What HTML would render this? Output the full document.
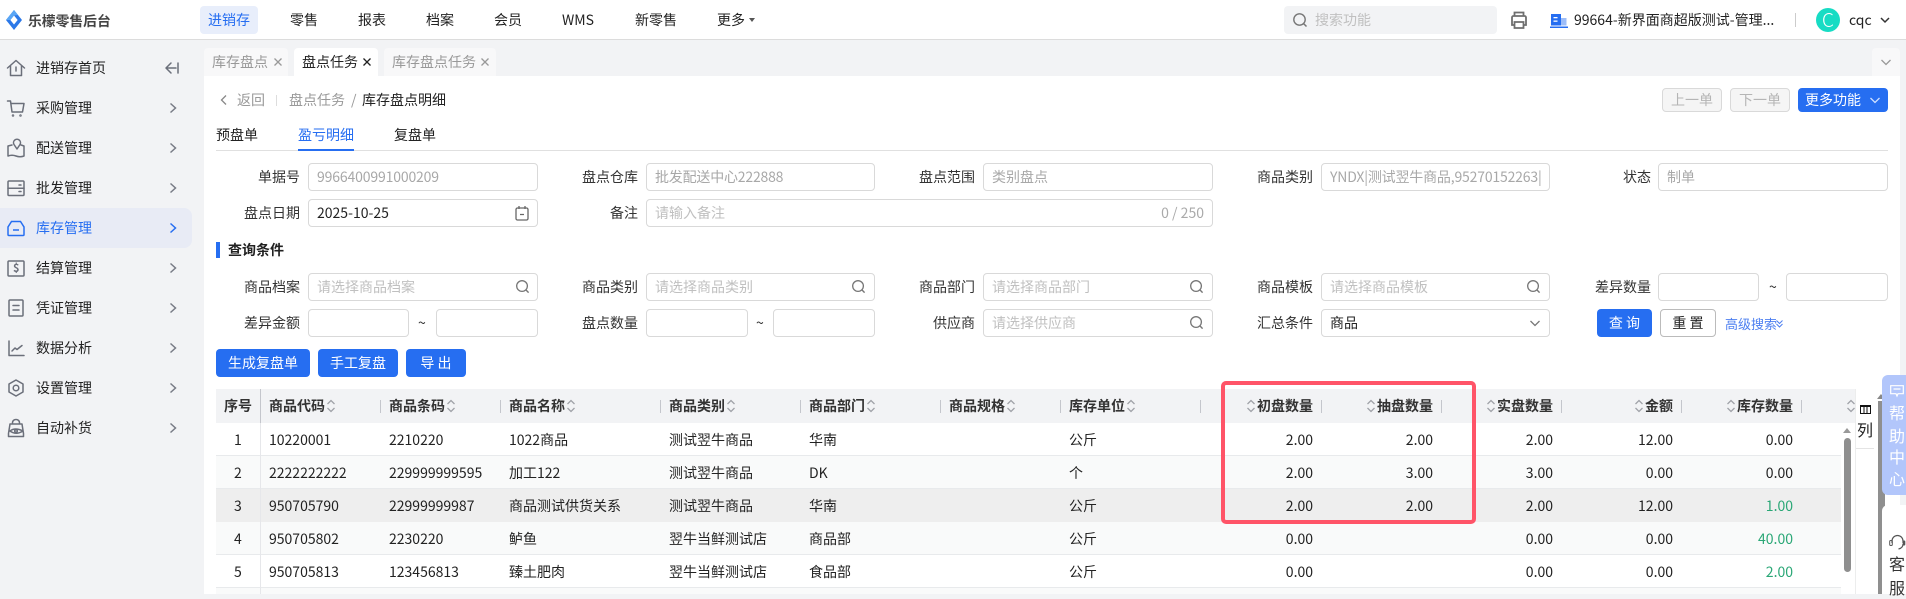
<!DOCTYPE html>
<html lang="zh"><head><meta charset="utf-8"><title>库存盘点明细</title>
<style>
*{box-sizing:border-box}
html,body{margin:0;padding:0}
body{width:1906px;height:594px;overflow:hidden;position:relative;background:#f2f3f5;font-family:"Noto Sans CJK SC","Liberation Sans",sans-serif;font-size:14px;color:#222}
.a{position:absolute}
.t{position:absolute;white-space:nowrap;line-height:20px;font-size:14px}
.i{position:absolute;height:28px;background:#fff;border:1px solid #d9d9d9;border-radius:4px;line-height:26px;padding-left:8px;white-space:nowrap;overflow:hidden}
.g{color:#a8a8a8}.p{color:#c0c0c0}.l{color:#333}
.b{position:absolute;background:#266ef1;color:#fff;border-radius:4px;text-align:center;height:28px;line-height:28px;white-space:nowrap}
.h{font-weight:700;color:#333}
.n{stroke:#6b6f7a;fill:none;stroke-width:1.5;stroke-linejoin:round;stroke-linecap:round}
svg{position:absolute;overflow:visible}
.rb{position:absolute;left:216px;width:1625px;border-bottom:1px solid #e8eaec}
.sp{position:absolute;top:400px;width:1px;height:13px;background:#c4c6cc}
.gr{color:#2aa776}
</style></head><body>
<svg width="0" height="0" style="position:absolute"><defs>
<symbol id="s" viewBox="0 0 8 14" overflow="visible"><path d="M0.500 5L4 1.500 7.500 5M0.500 9L4 12.500 7.500 9" fill="none" stroke="#a0a2a8" stroke-width="1.300"/></symbol>
<symbol id="q" viewBox="0 0 16 16" overflow="visible"><circle cx="7.500" cy="7.500" r="5.700" fill="none" stroke="#777" stroke-width="1.400"/><path d="M11.500 11.500L14.500 14.500" stroke="#777" stroke-width="1.500" fill="none"/></symbol>
<symbol id="c" viewBox="0 0 8 12" overflow="visible"><path d="M1.500 1.500L6.500 6l-5 4.500" fill="none" stroke="#777b85" stroke-width="1.500"/></symbol>
<symbol id="x" viewBox="0 0 8 8" overflow="visible"><path d="M.5 .5L7.500 7.500M7.500 .5L.5 7.500" fill="none" stroke="currentColor" stroke-width="1.300"/></symbol>
</defs></svg>

<!-- header -->
<div class="a" style="left:0;top:0;width:1906px;height:40px;background:#fff;border-bottom:1px solid #dcdcdc"></div>
<svg style="left:6px;top:10px" width="16" height="20" viewBox="0 0 14 20" preserveAspectRatio="none"><path d="M7 0L14 10L7 20L0 10Z" fill="#2b78e8"/><path d="M7 5.500L10.200 10L7 14.500L3.800 10Z" fill="#fff"/><path d="M7 0L10.500 5 7 5.500 3.800 10 0 10Z" fill="#5aa6f5"/></svg>
<div class="t" style="left:28px;top:10px;font-weight:700;color:#444;font-size:13.800px">乐檬零售后台</div>
<div class="a" style="left:200px;top:6px;width:58px;height:28px;background:#e8eefb;border-radius:4px"></div>
<div class="t" style="left:208px;top:10px;color:#266ef1">进销存</div>
<div class="t" style="left:290px;top:10px">零售</div>
<div class="t" style="left:358px;top:10px">报表</div>
<div class="t" style="left:426px;top:10px">档案</div>
<div class="t" style="left:494px;top:10px">会员</div>
<div class="t" style="left:562px;top:10px">WMS</div>
<div class="t" style="left:635px;top:10px">新零售</div>
<div class="t" style="left:717px;top:10px">更多</div>
<div class="a" style="left:749px;top:18px;border:3.500px solid transparent;border-top:4px solid #555;border-bottom:0"></div>
<div class="a" style="left:1284px;top:6px;width:213px;height:28px;background:#f2f3f5;border-radius:4px"></div>
<svg style="left:1292px;top:12px" width="16" height="16"><use href="#q"/></svg>
<div class="t p" style="left:1315px;top:10px">搜索功能</div>
<svg style="left:1510px;top:11px" width="18" height="18" viewBox="0 0 18 18"><path d="M4.500 5V1.500h9V5M4.500 14H2V6.500A1.500 1.500 0 0 1 3.500 5h11A1.500 1.500 0 0 1 16 6.500V14h-2.500M4.500 11h9v6h-9z" fill="none" stroke="#6f6f6f" stroke-width="1.800"/></svg>
<svg style="left:1550px;top:14px" width="18" height="14" viewBox="0 0 18 14"><rect x="1" y="0" width="10" height="11.500" fill="#266ef1"/><rect x="11" y="4" width="5.500" height="7.500" fill="#9dbdf8"/><rect x="0" y="12.500" width="18" height="1.500" fill="#266ef1"/><rect x="3.500" y="3" width="4" height="1.300" fill="#fff"/><rect x="3.500" y="6.500" width="4" height="1.300" fill="#fff"/></svg>
<div class="t" style="left:1574px;top:10px">99664-新界面商超版测试-管理...</div>
<div class="a" style="left:1795px;top:13px;width:1px;height:14px;background:#ccc"></div>
<div class="a" style="left:1816px;top:8px;width:24px;height:24px;border-radius:50%;background:#17dcc4;color:#fff;text-align:center;line-height:24px;font-size:19px;font-weight:300">C</div>
<div class="t" style="left:1849px;top:10px">cqc</div>
<svg style="left:1880px;top:17px" width="10" height="7" viewBox="0 0 10 7"><path d="M1 1l4 4 4-4" fill="none" stroke="#333" stroke-width="1.500"/></svg>

<!-- sidebar -->
<div class="a" style="left:0;top:208px;width:192px;height:40px;background:#e8ebf5;border-radius:0 8px 8px 0"></div>
<svg style="left:7px;top:59px" width="18" height="18" viewBox="0 0 18 18" class="n"><path d="M.5 9L9 1.500 17.500 9M3.500 7V16.500h11V7M9 8v4"/></svg>
<div class="t" style="left:36px;top:58px">进销存首页</div>
<svg style="left:165px;top:62px" width="14" height="12" viewBox="0 0 14 12" class="n"><path d="M6 1L1 6l5 5M1 6h10M13 1v10"/></svg>
<svg style="left:7px;top:99px" width="18" height="18" viewBox="0 0 18 18" class="n"><path d="M.5 2h3l1.500 11h10.500L17 4.500H4"/><circle cx="6" cy="16.500" r=".5"/><circle cx="13.500" cy="16.500" r=".5"/></svg>
<div class="t" style="left:36px;top:98px">采购管理</div>
<svg style="left:7px;top:139px" width="18" height="18" viewBox="0 0 18 18" class="n"><path d="M5 6L1 7v10q4-1.500 8 0t8 0V7L14 6M10 10L7 5.500a3.500 3.500 0 1 1 6 0z"/></svg>
<div class="t" style="left:36px;top:138px">配送管理</div>
<svg style="left:7px;top:179px" width="18" height="18" viewBox="0 0 18 18" class="n"><rect x="1" y="2" width="16" height="14.500" rx="1"/><path d="M1 9.200h16M12 6h2M12 12.500h2"/></svg>
<div class="t" style="left:36px;top:178px">批发管理</div>
<svg style="left:7px;top:219px" width="18" height="18" viewBox="0 0 18 18" fill="none" stroke="#266ef1" stroke-width="1.500"><path d="M4.500 2.500h9L17 8v7.500a1 1 0 0 1-1 1H2a1 1 0 0 1-1-1V8zM6 11h6"/></svg>
<div class="t" style="left:36px;top:218px;color:#266ef1">库存管理</div>
<svg style="left:7px;top:259px" width="18" height="18" viewBox="0 0 18 18" class="n"><rect x="1" y="2" width="16" height="15" rx="1"/></svg>
<div class="t" style="left:13px;top:258px;font-size:11px;font-weight:700;color:#6b6f7a">$</div>
<div class="t" style="left:36px;top:258px">结算管理</div>
<svg style="left:8px;top:299px" width="16" height="18" viewBox="0 0 16 18" class="n"><rect x="1" y="1" width="14" height="16" rx="1"/><path d="M5 6.500h6M5 11h6"/></svg>
<div class="t" style="left:36px;top:298px">凭证管理</div>
<svg style="left:7px;top:339px" width="18" height="18" viewBox="0 0 18 18" class="n"><path d="M2 2v14.500h15M5 12l3-3 2 1.500 5-4"/></svg>
<div class="t" style="left:36px;top:338px">数据分析</div>
<svg style="left:7px;top:379px" width="18" height="18" viewBox="0 0 18 18" class="n"><path d="M9 1l7 4v8l-7 4-7-4V5z"/><circle cx="9" cy="9" r="2.800"/></svg>
<div class="t" style="left:36px;top:378px">设置管理</div>
<svg style="left:7px;top:419px" width="18" height="18" viewBox="0 0 18 18" class="n"><path d="M5.500 5V3.500a3.500 3 0 0 1 7 0V5M3 5h12l1.500 9.500v3H1.500v-3zM3 12q5-4 13 0-7 4.500-13 0z"/><circle cx="9" cy="12" r="1.300"/></svg>
<div class="t" style="left:36px;top:418px">自动补货</div>
<svg style="left:169px;top:102px" width="8" height="12"><use href="#c"/></svg>
<svg style="left:169px;top:142px" width="8" height="12"><use href="#c"/></svg>
<svg style="left:169px;top:182px" width="8" height="12"><use href="#c"/></svg>
<svg style="left:169px;top:222px" width="8" height="12" viewBox="0 0 8 12"><path d="M1.500 1.500L6.500 6l-5 4.500" fill="none" stroke="#266ef1" stroke-width="1.500"/></svg>
<svg style="left:169px;top:262px" width="8" height="12"><use href="#c"/></svg>
<svg style="left:169px;top:302px" width="8" height="12"><use href="#c"/></svg>
<svg style="left:169px;top:342px" width="8" height="12"><use href="#c"/></svg>
<svg style="left:169px;top:382px" width="8" height="12"><use href="#c"/></svg>
<svg style="left:169px;top:422px" width="8" height="12"><use href="#c"/></svg>

<!-- tabs -->
<div class="a" style="left:204px;top:48px;width:84px;height:28px;background:#f8f8f9;border-radius:4px 4px 0 0"></div>
<div class="t" style="left:212px;top:52px;color:#999">库存盘点</div><svg style="left:274px;top:58px;color:#999" width="8" height="8"><use href="#x"/></svg>
<div class="a" style="left:294px;top:48px;width:84px;height:28px;background:#fff;border-radius:4px 4px 0 0"></div>
<div class="t" style="left:302px;top:52px">盘点任务</div><svg style="left:363px;top:58px;color:#222" width="8" height="8"><use href="#x"/></svg>
<div class="a" style="left:384px;top:48px;width:112px;height:28px;background:#f8f8f9;border-radius:4px 4px 0 0"></div>
<div class="t" style="left:392px;top:52px;color:#999">库存盘点任务</div><svg style="left:481px;top:58px;color:#999" width="8" height="8"><use href="#x"/></svg>
<div class="a" style="left:1872px;top:48px;width:28px;height:28px;background:#f8f8f9;border-radius:4px 4px 0 0"></div>
<svg style="left:1881px;top:59px" width="10" height="7" viewBox="0 0 10 7"><path d="M0.500 1l4.500 4.500L9.500 1" fill="none" stroke="#999" stroke-width="1.300"/></svg>

<!-- content -->
<div class="a" style="left:204px;top:76px;width:1696px;height:518px;background:#fff"></div>
<svg style="left:220px;top:95px" width="7" height="10" viewBox="0 0 7 10"><path d="M6 .5L1.500 5 6 9.500" fill="none" stroke="#888" stroke-width="1.300"/></svg>
<div class="t" style="left:237px;top:90px;color:#999">返回</div>
<div class="a" style="left:276px;top:95px;width:1px;height:11px;background:#ddd"></div>
<div class="t" style="left:289px;top:90px;color:#999">盘点任务</div>
<div class="t" style="left:351px;top:90px;color:#999">/</div>
<div class="t" style="left:362px;top:90px">库存盘点明细</div>
<div class="t" style="left:216px;top:125px">预盘单</div>
<div class="t" style="left:298px;top:125px;color:#266ef1">盈亏明细</div>
<div class="t" style="left:394px;top:125px">复盘单</div>
<div class="a" style="left:216px;top:150px;width:1672px;height:1px;background:#e0e0e0"></div>
<div class="a" style="left:298px;top:149px;width:56px;height:2px;background:#266ef1"></div>

<div class="a" style="left:1662px;top:88px;width:60px;height:24px;background:#f5f5f5;border:1px solid #d9d9d9;border-radius:4px;color:#b5b5b5;text-align:center;line-height:22px">上一单</div>
<div class="a" style="left:1730px;top:88px;width:60px;height:24px;background:#f5f5f5;border:1px solid #d9d9d9;border-radius:4px;color:#b5b5b5;text-align:center;line-height:22px">下一单</div>
<div class="b" style="left:1798px;top:88px;width:90px;height:24px;line-height:24px;text-align:left;padding-left:7px">更多功能</div>
<svg style="left:1870px;top:97px" width="10" height="7" viewBox="0 0 10 7"><path d="M.500 1L5 5.500 9.500 1" fill="none" stroke="#cfe0ff" stroke-width="1.300"/></svg>

<!-- form -->
<div class="t l" style="left:258px;top:167px">单据号</div><div class="i g" style="left:308px;top:163px;width:230px;letter-spacing:-.15px">9966400991000209</div>
<div class="t l" style="left:582px;top:167px">盘点仓库</div><div class="i g" style="left:646px;top:163px;width:229px;letter-spacing:-.2px">批发配送中心222888</div>
<div class="t l" style="left:919px;top:167px">盘点范围</div><div class="i g" style="left:983px;top:163px;width:230px">类别盘点</div>
<div class="t l" style="left:1257px;top:167px">商品类别</div><div class="i g" style="left:1321px;top:163px;width:229px;letter-spacing:-.18px">YNDX|测试翌牛商品,95270152263|</div>
<div class="t l" style="left:1623px;top:167px">状态</div><div class="i g" style="left:1658px;top:163px;width:230px">制单</div>

<div class="t l" style="left:244px;top:203px">盘点日期</div><div class="i" style="left:308px;top:199px;width:230px">2025-10-25</div>
<svg style="left:515px;top:205px" width="14" height="16" viewBox="0 0 14 16"><rect x="1" y="3" width="12" height="12" rx="1.500" fill="none" stroke="#666" stroke-width="1.300"/><path d="M4 1v3M10 1v3M5 9.500h4" stroke="#666" stroke-width="1.300"/></svg>
<div class="t l" style="left:610px;top:203px">备注</div><div class="i p" style="left:646px;top:199px;width:567px">请输入备注</div>
<div class="t" style="right:702px;top:203px;color:#aaa">0 / 250</div>

<div class="a" style="left:216px;top:242px;width:4px;height:16px;background:#266ef1"></div>
<div class="t" style="left:228px;top:240px;font-weight:700">查询条件</div>

<div class="t l" style="left:244px;top:277px">商品档案</div><div class="i p" style="left:308px;top:273px;width:230px">请选择商品档案</div>
<div class="t l" style="left:582px;top:277px">商品类别</div><div class="i p" style="left:646px;top:273px;width:229px">请选择商品类别</div>
<div class="t l" style="left:919px;top:277px">商品部门</div><div class="i p" style="left:983px;top:273px;width:230px">请选择商品部门</div>
<div class="t l" style="left:1257px;top:277px">商品模板</div><div class="i p" style="left:1321px;top:273px;width:229px">请选择商品模板</div>
<div class="t l" style="left:1595px;top:277px">差异数量</div><div class="i" style="left:1658px;top:273px;width:101px"></div>
<div class="t l" style="left:1769px;top:277px">~</div><div class="i" style="left:1786px;top:273px;width:102px"></div>
<svg style="left:515px;top:279px" width="15" height="15"><use href="#q"/></svg>
<svg style="left:851px;top:279px" width="15" height="15"><use href="#q"/></svg>
<svg style="left:1189px;top:279px" width="15" height="15"><use href="#q"/></svg>
<svg style="left:1526px;top:279px" width="15" height="15"><use href="#q"/></svg>

<div class="t l" style="left:244px;top:313px">差异金额</div><div class="i" style="left:308px;top:309px;width:101px"></div>
<div class="t l" style="left:418px;top:313px">~</div><div class="i" style="left:436px;top:309px;width:102px"></div>
<div class="t l" style="left:582px;top:313px">盘点数量</div><div class="i" style="left:646px;top:309px;width:102px"></div>
<div class="t l" style="left:756px;top:313px">~</div><div class="i" style="left:773px;top:309px;width:102px"></div>
<div class="t l" style="left:933px;top:313px">供应商</div><div class="i p" style="left:983px;top:309px;width:230px">请选择供应商</div>
<svg style="left:1189px;top:315px" width="15" height="15"><use href="#q"/></svg>
<div class="t l" style="left:1257px;top:313px">汇总条件</div><div class="i" style="left:1321px;top:309px;width:229px">商品</div>
<svg style="left:1530px;top:320px" width="10" height="7" viewBox="0 0 10 7"><path d="M.500 1L5 5.500 9.500 1" fill="none" stroke="#777" stroke-width="1.300"/></svg>
<div class="b" style="left:1597px;top:309px;width:55px">查 询</div>
<div class="a" style="left:1660px;top:309px;width:56px;height:28px;background:#fff;border:1px solid #bbb;border-radius:4px;text-align:center;line-height:26px">重 置</div>
<div class="t" style="left:1725px;top:314px;color:#4d7ff0;font-size:13px">高级搜索</div>
<svg style="left:1776px;top:320px" width="7" height="8" viewBox="0 0 7 8"><path d="M.500 .5L3.500 3.500 6.500 .5M.500 4L3.500 7 6.500 4" fill="none" stroke="#4d7ff0" stroke-width="1"/></svg>

<div class="b" style="left:216px;top:349px;width:94px">生成复盘单</div>
<div class="b" style="left:318px;top:349px;width:80px">手工复盘</div>
<div class="b" style="left:406px;top:349px;width:60px">导 出</div>

<!-- table -->
<div class="a" style="left:216px;top:389px;width:1639px;height:34px;background:#f2f3f5"></div>
<div class="rb" style="top:423px;height:33px;background:#fff"></div>
<div class="rb" style="top:456px;height:33px;background:#f9fafa"></div>
<div class="rb" style="top:489px;height:33px;background:#eee;border-bottom:0"></div>
<div class="rb" style="top:522px;height:33px;background:#f9fafa"></div>
<div class="rb" style="top:555px;height:33px;background:#fff"></div>
<div class="rb" style="top:588px;height:6px;background:#f9fafa;border:0"></div>
<div class="a" style="left:260px;top:389px;width:1px;height:205px;background:#e6e7ea"></div>
<div class="a" style="left:260px;top:389px;width:1px;height:34px;background:#c4c6cc"></div>

<div class="t h" style="left:224px;top:396px">序号</div>
<div class="t h" style="left:269px;top:396px">商品代码</div><svg style="left:327px;top:399px" width="8" height="14"><use href="#s"/></svg>
<div class="sp" style="left:380px"></div>
<div class="t h" style="left:389px;top:396px">商品条码</div><svg style="left:447px;top:399px" width="8" height="14"><use href="#s"/></svg>
<div class="sp" style="left:500px"></div>
<div class="t h" style="left:509px;top:396px">商品名称</div><svg style="left:567px;top:399px" width="8" height="14"><use href="#s"/></svg>
<div class="sp" style="left:660px"></div>
<div class="t h" style="left:669px;top:396px">商品类别</div><svg style="left:727px;top:399px" width="8" height="14"><use href="#s"/></svg>
<div class="sp" style="left:800px"></div>
<div class="t h" style="left:809px;top:396px">商品部门</div><svg style="left:867px;top:399px" width="8" height="14"><use href="#s"/></svg>
<div class="sp" style="left:940px"></div>
<div class="t h" style="left:949px;top:396px">商品规格</div><svg style="left:1007px;top:399px" width="8" height="14"><use href="#s"/></svg>
<div class="sp" style="left:1060px"></div>
<div class="t h" style="left:1069px;top:396px">库存单位</div><svg style="left:1127px;top:399px" width="8" height="14"><use href="#s"/></svg>
<div class="sp" style="left:1200px"></div>
<svg style="left:1247px;top:399px" width="8" height="14"><use href="#s"/></svg><div class="t h" style="right:593px;top:396px">初盘数量</div>
<div class="sp" style="left:1321px"></div>
<svg style="left:1367px;top:399px" width="8" height="14"><use href="#s"/></svg><div class="t h" style="right:473px;top:396px">抽盘数量</div>
<div class="sp" style="left:1441px"></div>
<svg style="left:1487px;top:399px" width="8" height="14"><use href="#s"/></svg><div class="t h" style="right:353px;top:396px">实盘数量</div>
<div class="sp" style="left:1561px"></div>
<svg style="left:1635px;top:399px" width="8" height="14"><use href="#s"/></svg><div class="t h" style="right:233px;top:396px">金额</div>
<div class="sp" style="left:1681px"></div>
<svg style="left:1727px;top:399px" width="8" height="14"><use href="#s"/></svg><div class="t h" style="right:113px;top:396px">库存数量</div>
<div class="sp" style="left:1801px"></div>
<svg style="left:1847px;top:399px" width="8" height="14"><use href="#s"/></svg>

<!-- row1 -->
<div class="t" style="left:234px;top:430px">1</div><div class="t" style="left:269px;top:430px">10220001</div><div class="t" style="left:389px;top:430px">2210220</div><div class="t" style="left:509px;top:430px">1022商品</div><div class="t" style="left:669px;top:430px">测试翌牛商品</div><div class="t" style="left:809px;top:430px">华南</div><div class="t" style="left:1069px;top:430px">公斤</div>
<div class="t" style="right:593px;top:430px">2.00</div><div class="t" style="right:473px;top:430px">2.00</div><div class="t" style="right:353px;top:430px">2.00</div><div class="t" style="right:233px;top:430px">12.00</div><div class="t" style="right:113px;top:430px">0.00</div>
<!-- row2 -->
<div class="t" style="left:234px;top:463px">2</div><div class="t" style="left:269px;top:463px">2222222222</div><div class="t" style="left:389px;top:463px">229999999595</div><div class="t" style="left:509px;top:463px">加工122</div><div class="t" style="left:669px;top:463px">测试翌牛商品</div><div class="t" style="left:809px;top:463px">DK</div><div class="t" style="left:1069px;top:463px">个</div>
<div class="t" style="right:593px;top:463px">2.00</div><div class="t" style="right:473px;top:463px">3.00</div><div class="t" style="right:353px;top:463px">3.00</div><div class="t" style="right:233px;top:463px">0.00</div><div class="t" style="right:113px;top:463px">0.00</div>
<!-- row3 -->
<div class="t" style="left:234px;top:496px">3</div><div class="t" style="left:269px;top:496px">950705790</div><div class="t" style="left:389px;top:496px">22999999987</div><div class="t" style="left:509px;top:496px">商品测试供货关系</div><div class="t" style="left:669px;top:496px">测试翌牛商品</div><div class="t" style="left:809px;top:496px">华南</div><div class="t" style="left:1069px;top:496px">公斤</div>
<div class="t" style="right:593px;top:496px">2.00</div><div class="t" style="right:473px;top:496px">2.00</div><div class="t" style="right:353px;top:496px">2.00</div><div class="t" style="right:233px;top:496px">12.00</div><div class="t gr" style="right:113px;top:496px">1.00</div>
<!-- row4 -->
<div class="t" style="left:234px;top:529px">4</div><div class="t" style="left:269px;top:529px">950705802</div><div class="t" style="left:389px;top:529px">2230220</div><div class="t" style="left:509px;top:529px">鲈鱼</div><div class="t" style="left:669px;top:529px">翌牛当鲜测试店</div><div class="t" style="left:809px;top:529px">商品部</div><div class="t" style="left:1069px;top:529px">公斤</div>
<div class="t" style="right:593px;top:529px">0.00</div><div class="t" style="right:353px;top:529px">0.00</div><div class="t" style="right:233px;top:529px">0.00</div><div class="t gr" style="right:113px;top:529px">40.00</div>
<!-- row5 -->
<div class="t" style="left:234px;top:562px">5</div><div class="t" style="left:269px;top:562px">950705813</div><div class="t" style="left:389px;top:562px">123456813</div><div class="t" style="left:509px;top:562px">臻土肥肉</div><div class="t" style="left:669px;top:562px">翌牛当鲜测试店</div><div class="t" style="left:809px;top:562px">食品部</div><div class="t" style="left:1069px;top:562px">公斤</div>
<div class="t" style="right:593px;top:562px">0.00</div><div class="t" style="right:353px;top:562px">0.00</div><div class="t" style="right:233px;top:562px">0.00</div><div class="t gr" style="right:113px;top:562px">2.00</div>

<!-- red box -->
<div class="a" style="left:1221px;top:381px;width:255px;height:143px;border:4px solid #ff5468;border-radius:5px"></div>

<!-- table scrollbar -->
<div class="a" style="left:1843px;top:428px;border:4px solid transparent;border-bottom:5px solid #999;border-top:0"></div>
<div class="a" style="left:1844px;top:438px;width:7px;height:134px;background:#8f8f8f;border-radius:4px"></div>

<!-- column panel -->
<div class="a" style="left:1855px;top:389px;width:1px;height:205px;background:#eceded"></div>
<div class="a" style="left:1860px;top:405px;width:11px;height:9px;border:1.500px solid #111;border-width:2px 1px 1px;background:linear-gradient(90deg,#fff 0 2.500px,#111 2.500px 3.500px,#fff 3.500px 5.500px,#111 5.500px 6.500px,#fff 6.500px)"></div>
<div class="t" style="left:1857px;top:419px;font-size:16px">列</div>
<div class="a" style="left:1856px;top:448px;width:18px;height:1px;background:#e4e4e4"></div>

<!-- page scrollbar -->
<div class="a" style="left:1877px;top:394px;border:4px solid transparent;border-bottom:5px solid #888;border-top:0"></div>
<div class="a" style="left:1878px;top:401px;width:7px;height:193px;background:#8f8f8f"></div>

<!-- help -->
<div class="a" style="left:1882px;top:375px;width:24px;height:120px;background:#b2c6fb;border-radius:6px 0 0 6px"></div>
<svg style="left:1890px;top:385px" width="14" height="12" viewBox="0 0 14 12"><path d="M.700 .7h12.600v8H8L7 11 6 8.700H.700zM3.500 4h7" fill="none" stroke="#fff" stroke-width="1.200"/></svg>
<div class="t" style="left:1889px;top:402px;font-size:16px;color:#fff">帮</div>
<div class="t" style="left:1889px;top:425px;font-size:16px;color:#fff">助</div>
<div class="t" style="left:1889px;top:446px;font-size:16px;color:#fff">中</div>
<div class="t" style="left:1889px;top:468px;font-size:16px;color:#fff">心</div>
<div class="a" style="left:1882px;top:505px;width:24px;height:89px;background:#fff;border-radius:6px 0 0 0"></div>
<svg style="left:1889px;top:534px" width="17" height="17" viewBox="0 0 17 17"><path d="M3 9V7a5.500 5.500 0 0 1 11 0v2M14 10q0 4-4.500 5" fill="none" stroke="#555" stroke-width="1.200"/><rect x=".7" y="6.500" width="2.600" height="5" rx="1" fill="none" stroke="#555"/><rect x="13.700" y="6.500" width="2.600" height="5" rx="1" fill="#555"/></svg>
<div class="t" style="left:1889px;top:553px;font-size:16px;color:#333">客</div>
<div class="t" style="left:1889px;top:577px;font-size:16px;color:#333">服</div>
</body></html>
